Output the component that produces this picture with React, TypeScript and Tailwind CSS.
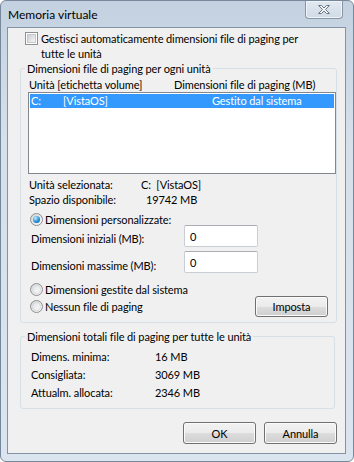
import React from 'react';

const font = "font-['Lato','Liberation_Sans',sans-serif]";

const CheckBox = () => (
  <span className="mt-[1px] flex h-[13px] w-[13px] shrink-0 items-center justify-center border border-[#8e8f8f] bg-white">
    <span className="h-[9px] w-[9px] border border-[#c6c8cb] bg-[linear-gradient(135deg,#c9cdd3,#f7f7f7)]" />
  </span>
);

const Radio = ({ checked }: { checked?: boolean }) => (
  <span className="flex h-[13px] w-[13px] shrink-0 items-center justify-center rounded-full border border-[#8e8f8f] bg-[linear-gradient(135deg,#cfd2d5,#fbfbfb)]">
    {checked ? (
      <span className="h-[7px] w-[7px] rounded-full bg-[radial-gradient(circle_at_35%_30%,#bdeeff,#2b8fd6_55%,#0c4f8c)]" />
    ) : (
      <span className="h-[9px] w-[9px] rounded-full border border-[#d9dbde] bg-[linear-gradient(135deg,#e1e3e6,#fafafa)]" />
    )}
  </span>
);

const Btn = ({ label, h = 'h-[22px]' }: { label: string; h?: string }) => (
  <button
    className={`${h} w-[73px] rounded-[3px] border border-[#707070] bg-[linear-gradient(#f2f2f2_0%,#ebebeb_50%,#dddddd_50%,#cfcfcf_100%)] text-[11px] leading-[15px] text-black shadow-[inset_0_0_0_1px_#fbfbfb]`}
  >
    {label}
  </button>
);

const CloseGlyph = () => (
  <svg width="14" height="11" viewBox="0 0 14 11">
    <path
      d="M1.5 1.5 L4.5 1.5 L7 4 L9.5 1.5 L12.5 1.5 L8.5 5.5 L12.5 9.5 L9.5 9.5 L7 7 L4.5 9.5 L1.5 9.5 L5.5 5.5 Z"
      fill="#f4f6f8"
      stroke="#6d7782"
      strokeWidth="1"
      strokeLinejoin="round"
    />
  </svg>
);

export default function App() {
  return (
    <div
      className={`${font} flex h-[462px] w-[354px] flex-col rounded-[6px] border border-[#77889a] bg-[linear-gradient(180deg,#c3d1e0_0%,#d5e0eb_30%,#dbe5ef_100%)] text-[11px] leading-[15px] tracking-[-0.1px] text-black`}
    >
      <div className="flex h-[26px] shrink-0 items-start justify-between">
        <div className="pl-[7px] pt-[6px] text-[12px] tracking-normal text-black">Memoria virtuale</div>
        <div className="mr-[10px] flex h-[18px] w-[38px] items-center justify-center rounded-b-[4px] border border-t-0 border-[#8996a4] bg-[linear-gradient(180deg,#e2e9f1,#d0dbe6)] shadow-[inset_0_0_0_1px_#eef3f8]">
          <CloseGlyph />
        </div>
      </div>

      <div className="ml-[6px] flex h-[427px] w-[339px] flex-col border border-[#8393a3] bg-[#f0f0f0]">
        <label className="ml-[17px] mt-[3px] flex items-start gap-[3px]">
          <CheckBox />
          <span className="w-[262px]">Gestisci automaticamente dimensioni file di paging per tutte le unità</span>
        </label>

        <fieldset className="ml-[12px] mt-0 w-[316px] rounded-[3px] border border-[#d5dfe5] p-0">
          <legend className="ml-[4px] px-[2px]">Dimensioni file di paging per ogni unità</legend>
          <div className="mt-[1px] flex pl-[8px]">
            <span className="w-[145px]">Unità [etichetta volume]</span>
            <span>Dimensioni file di paging (MB)</span>
          </div>
          <div className="ml-[7px] h-[82px] w-[308px] border border-[#828790] bg-white p-[1px]">
            <div className="flex h-[14px] items-center bg-[#3399ff] pl-[1px] leading-[14px] text-white">
              <span className="w-[32px]">C:</span>
              <span className="w-[149px]">[VistaOS]</span>
              <span>Gestito dal sistema</span>
            </div>
          </div>
          <div className="mt-[3px] flex pl-[8px]">
            <span className="w-[112px]">Unità selezionata:</span>
            <span>C:&nbsp;&nbsp;[VistaOS]</span>
          </div>
          <div className="flex pl-[8px]">
            <span className="w-[117px]">Spazio disponibile:</span>
            <span>19742 MB</span>
          </div>

          <label className="mt-[5px] flex items-center gap-[2px] pl-[9px]">
            <Radio checked />
            <span>Dimensioni personalizzate:</span>
          </label>
          <div className="-mt-[2px] flex items-start pl-[10px]">
            <span className="w-[153px] pt-[6px]">Dimensioni iniziali (MB):</span>
            <input
              defaultValue="0"
              className="h-[22px] w-[74px] rounded-[2px] border border-[#c9ced6] border-t-[#abadb3] bg-white px-[5px] text-[11px] outline-none"
            />
          </div>
          <div className="mt-[4px] flex items-start pl-[10px]">
            <span className="w-[153px] pt-[7px]">Dimensioni massime (MB):</span>
            <input
              defaultValue="0"
              className="h-[22px] w-[74px] rounded-[2px] border border-[#c9ced6] border-t-[#abadb3] bg-white px-[5px] text-[11px] outline-none"
            />
          </div>
          <label className="mt-[9px] flex items-center gap-[2px] pl-[9px]">
            <Radio />
            <span>Dimensioni gestite dal sistema</span>
          </label>
          <div className="-mt-[1px] mb-[5px] flex items-center justify-between pl-[9px] pr-[8px]">
            <label className="flex items-center gap-[2px]">
              <Radio />
              <span>Nessun file di paging</span>
            </label>
            <Btn label="Imposta" h="h-[21px]" />
          </div>
        </fieldset>

        <fieldset className="ml-[12px] mt-[6px] w-[315px] rounded-[3px] border border-[#d5dfe5] p-0 pb-[8px]">
          <legend className="ml-[4px] px-[2px]">Dimensioni totali file di paging per tutte le unità</legend>
          <div className="mt-[5px] flex flex-col gap-[3px] pl-[10px]">
            <div className="flex">
              <span className="w-[124px]">Dimens. minima:</span>
              <span>16 MB</span>
            </div>
            <div className="flex">
              <span className="w-[124px]">Consigliata:</span>
              <span>3069 MB</span>
            </div>
            <div className="flex">
              <span className="w-[124px]">Attualm. allocata:</span>
              <span>2346 MB</span>
            </div>
          </div>
        </fieldset>

        <div className="mt-[13px] flex justify-end gap-[8px] pr-[8px]">
          <Btn label="OK" />
          <Btn label="Annulla" />
        </div>
      </div>
    </div>
  );
}
